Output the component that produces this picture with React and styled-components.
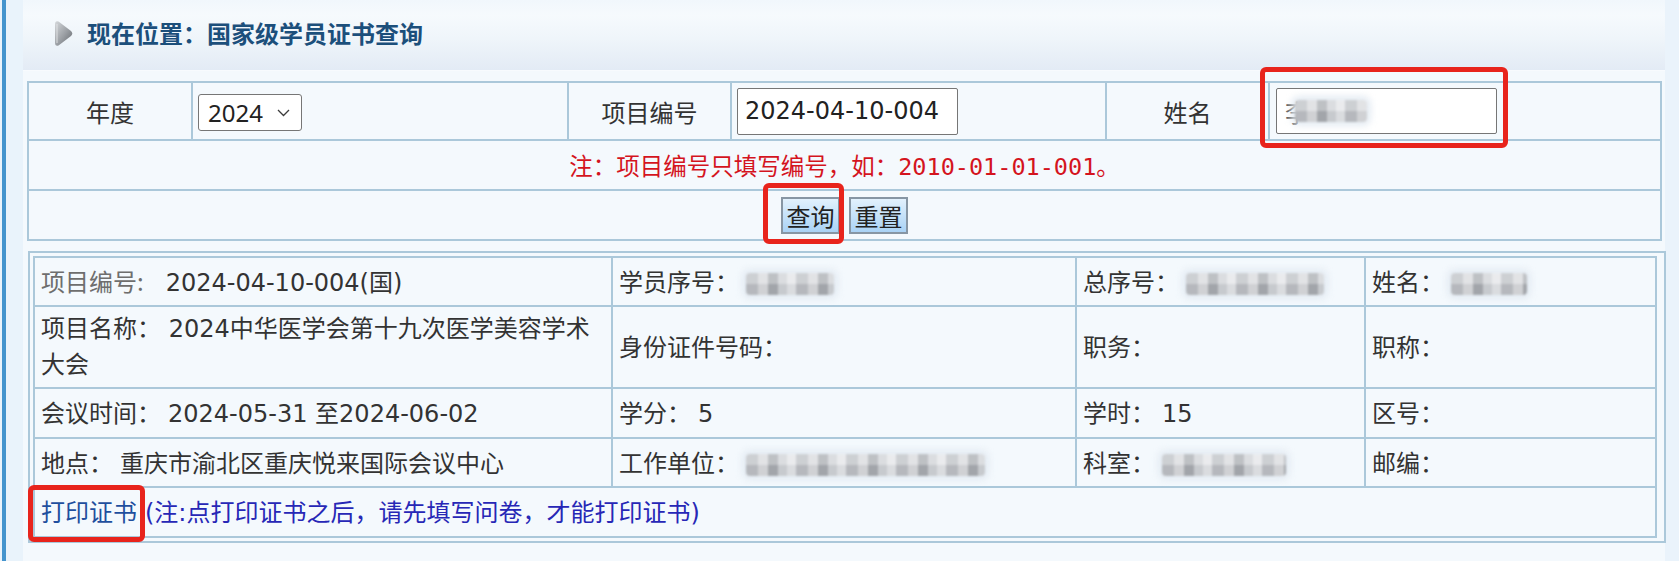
import React from 'react'
import styled, { createGlobalStyle } from 'styled-components'

const cjk = `"DejaVu Sans", "Noto Sans CJK SC", sans-serif`

const GlobalStyle = createGlobalStyle`
    html, body {
        margin: 0;
        padding: 0;
    }
    body {
        background: #eaf3fb;
        font-family: ${cjk};
        font-size: 24px;
        color: #333;
    }
`

const marks = [
    { left: 1260, top: 67, width: 248, height: 81 },
    { left: 763, top: 183, width: 81, height: 61 },
    { left: 28, top: 485, width: 117, height: 57 },
]

function Blur({ w }) {
    return <Mosaic $w={w} />
}

function App() {
    return (
        <Page>
            <GlobalStyle />
            <Strip />
            <Gutter />
            <Main>
                <Header>
                    <svg width="19" height="27" viewBox="0 0 19 27">
                        <defs>
                            <linearGradient id="arw" x1="0" y1="0" x2="1" y2="1">
                                <stop offset="0" stopColor="#d5d8db" />
                                <stop offset="0.55" stopColor="#9a9ea3" />
                                <stop offset="1" stopColor="#64686d" />
                            </linearGradient>
                        </defs>
                        <path d="M4.5 1.5 Q1 0.3 1 4.5 L1 22.5 Q1 26.7 4.5 25.5 L17 16 Q19.5 13.5 17 11 Z" fill="url(#arw)" />
                        <path d="M3 4 L3 23" stroke="#e6e8ea" strokeWidth="1.2" opacity="0.7" />
                    </svg>
                    <Title>现在位置：国家级学员证书查询</Title>
                </Header>

                <Body>
                    <SearchTable>
                        <colgroup>
                            <col width="164" />
                            <col width="376" />
                            <col width="163" />
                            <col width="375" />
                            <col width="163" />
                            <col width="392" />
                        </colgroup>
                        <tbody>
                            <SearchRow $h={58}>
                                <FieldLabel>年度</FieldLabel>
                                <FieldCell>
                                    <SelectWrap>
                                        <Select defaultValue="2024">
                                            <option value="2024">2024</option>
                                        </Select>
                                        <Chevron width="13" height="8" viewBox="0 0 13 8">
                                            <path d="M1 1 L6.5 6.5 L12 1" fill="none" stroke="#3c3c3c" strokeWidth="1.3" />
                                        </Chevron>
                                    </SelectWrap>
                                </FieldCell>
                                <FieldLabel>项目编号</FieldLabel>
                                <FieldCell>
                                    <TextInput defaultValue="2024-04-10-004" />
                                </FieldCell>
                                <FieldLabel>姓名</FieldLabel>
                                <FieldCell>
                                    <FakeInput>
                                        <span>李</span>
                                        <Mosaic $w={72} $shift={-14} />
                                    </FakeInput>
                                </FieldCell>
                            </SearchRow>
                            <SearchRow $h={50}>
                                <Note colSpan={6}>注：项目编号只填写编号，如：2010-01-01-001。</Note>
                            </SearchRow>
                            <SearchRow $h={50}>
                                <td colSpan={6}>
                                    <Buttons>
                                        <Button>查询</Button>
                                        <Button>重置</Button>
                                    </Buttons>
                                </td>
                            </SearchRow>
                        </tbody>
                    </SearchTable>

                    <ResultFrame>
                        <ResultTable>
                            <colgroup>
                                <col width="578" />
                                <col width="464" />
                                <col width="289" />
                                <col width="291" />
                            </colgroup>
                            <tbody>
                                <ResultRow $h={49}>
                                    <Cell><Label $muted $gap={22}>项目编号:</Label>2024-04-10-004(国)</Cell>
                                    <Cell><Label>学员序号：</Label><Blur w={88} /></Cell>
                                    <Cell><Label>总序号：</Label><Blur w={138} /></Cell>
                                    <Cell><Label>姓名：</Label><Blur w={76} /></Cell>
                                </ResultRow>
                                <ResultRow $h={82}>
                                    <Cell>{'项目名称：\u00a02024中华医学会第十九次医学美容学术大会'}</Cell>
                                    <Cell><Label>身份证件号码：</Label></Cell>
                                    <Cell><Label>职务：</Label></Cell>
                                    <Cell><Label>职称：</Label></Cell>
                                </ResultRow>
                                <ResultRow $h={50}>
                                    <Cell><Label>会议时间：</Label>2024-05-31 至2024-06-02</Cell>
                                    <Cell><Label>学分：</Label>5</Cell>
                                    <Cell><Label>学时：</Label>15</Cell>
                                    <Cell><Label>区号：</Label></Cell>
                                </ResultRow>
                                <ResultRow $h={49}>
                                    <Cell><Label>地点：</Label>重庆市渝北区重庆悦来国际会议中心</Cell>
                                    <Cell><Label>工作单位：</Label><Blur w={239} /></Cell>
                                    <Cell><Label>科室：</Label><Blur w={124} /></Cell>
                                    <Cell><Label>邮编：</Label></Cell>
                                </ResultRow>
                                <ResultRow $h={50}>
                                    <Cell colSpan={4}>
                                        <PrintLink>打印证书</PrintLink>
                                        <PrintNote>(注:点打印证书之后，请先填写问卷，才能打印证书)</PrintNote>
                                    </Cell>
                                </ResultRow>
                            </tbody>
                        </ResultTable>
                    </ResultFrame>
                </Body>
            </Main>

            {marks.map((m, i) => (
                <Mark key={i} $left={m.left} $top={m.top} $w={m.width} $h={m.height} />
            ))}
        </Page>
    )
}

export default App

const Page = styled.div`
    position: relative;
    display: flex;
    height: 561px;
    padding-left: 2px;
    overflow: hidden;
`

const Strip = styled.div`
    flex: none;
    width: 4px;
    background: #4494cd;
`

const Gutter = styled.div`
    flex: none;
    width: 17px;
    background: #e9f3fb;
`

const Main = styled.div`
    flex: none;
    width: 1642px;
    background: #f4f9fd;
`

const Header = styled.div`
    height: 71px;
    box-sizing: border-box;
    display: flex;
    align-items: center;
    gap: 14px;
    padding: 0 0 5px 31px;
    border-bottom: 1px solid #f8fbfe;
    background: linear-gradient(to bottom, #f1f7fc 0%, #f6fafd 22%, #eff5fa 55%, #e3ebf5 100%);
    svg {
        margin-top: 2px;
    }
`

const Title = styled.h1`
    margin: 0;
    font-family: "Noto Sans CJK SC", sans-serif;
    font-size: 24px;
    font-weight: 700;
    color: #1c4f7b;
`

const Body = styled.div`
    padding: 10px 5px 0 4px;
`

const SearchTable = styled.table`
    width: 1633px;
    table-layout: fixed;
    border-collapse: collapse;
    td {
        border: 2px solid #abc8da;
        padding: 0 5px;
    }
`

const SearchRow = styled.tr`
    height: ${p => p.$h}px;
`

const FieldLabel = styled.td`
    text-align: center;
    font-family: "Noto Sans CJK SC", sans-serif;
    color: #333;
`

const FieldCell = styled.td`
    vertical-align: middle;
`

const SelectWrap = styled.div`
    position: relative;
    display: inline-block;
    vertical-align: middle;
    margin-top: 2px;
`

const Select = styled.select`
    appearance: none;
    display: block;
    width: 104px;
    height: 37px;
    padding: 0 0 0 9px;
    border: 1px solid #767676;
    border-radius: 3px;
    background: #fff;
    font-family: "Noto Sans", sans-serif;
    font-size: 24px;
    color: #222;
`

const Chevron = styled.svg`
    position: absolute;
    right: 12px;
    top: 15px;
    pointer-events: none;
`

const TextInput = styled.input`
    display: block;
    box-sizing: border-box;
    width: 221px;
    height: 47px;
    padding: 0 0 0 7px;
    border: 1px solid #767676;
    border-radius: 2px;
    background: #fff;
    font-family: ${cjk};
    font-size: 24px;
    color: #222;
`

const FakeInput = styled.div`
    display: flex;
    align-items: center;
    box-sizing: border-box;
    width: 221px;
    height: 46px;
    margin-left: 1px;
    padding-left: 8px;
    border: 1px solid #767676;
    border-radius: 2px;
    background: #fff;
    font-family: "Noto Sans CJK SC", sans-serif;
    color: #555;
    span {
        font-size: 24px;
    }
`

const Note = styled.td`
    text-align: center;
    font-family: "DejaVu Sans Mono", "Noto Sans CJK SC", monospace;
    font-size: 23.5px;
    color: #d4141e;
`

const Buttons = styled.div`
    display: flex;
    justify-content: center;
    gap: 9px;
    padding-top: 1px;
`

const Button = styled.button`
    box-sizing: border-box;
    width: 59px;
    height: 37px;
    padding: 0;
    border: 2px solid #8796a4;
    background: linear-gradient(to bottom, #e2f1fd 0%, #c6e2f9 50%, #a9d2f5 100%);
    font-family: "Noto Sans CJK SC", sans-serif;
    font-size: 24px;
    line-height: 1;
    color: #222;
`

const ResultFrame = styled.div`
    width: 1628px;
    margin: 10px 0 0 1px;
    padding: 3px;
    border: 2px solid #abc8da;
    box-sizing: content-box;
`

const ResultTable = styled.table`
    width: 1622px;
    table-layout: fixed;
    border-collapse: collapse;
`

const ResultRow = styled.tr`
    height: ${p => p.$h}px;
`

const Cell = styled.td`
    border: 2px solid #abc8da;
    padding: 0 6px;
    line-height: 36px;
    vertical-align: middle;
    color: #333;
`

const Label = styled.span`
    margin-right: ${p => p.$gap ?? 7}px;
    font-family: "Noto Sans CJK SC", sans-serif;
    color: ${p => (p.$muted ? '#6e6e6e' : '#333')};
`

const Mosaic = styled.span`
    display: inline-block;
    vertical-align: middle;
    width: ${p => p.$w}px;
    height: 22px;
    margin-left: ${p => p.$shift ?? 0}px;
    border-radius: 4px;
    background:
        linear-gradient(to bottom, rgba(255, 255, 255, 0.25) 0 50%, rgba(0, 0, 0, 0.04) 50% 100%),
        repeating-linear-gradient(90deg, #bdc0c5 0 12px, #d8dadd 12px 22px, #a9acb1 22px 32px, #cfd2d6 32px 41px, #e3e5e8 41px 50px);
    box-shadow: 0 0 6px 4px rgba(226, 234, 242, 0.9);
    filter: blur(0.8px);
`

const PrintLink = styled.a`
    font-family: "Noto Sans CJK SC", sans-serif;
    color: #1f4f9e;
    text-decoration: none;
`

const PrintNote = styled.span`
    margin-left: 8px;
    font-family: ${cjk};
    color: #2727b6;
`

const Mark = styled.div`
    position: absolute;
    left: ${p => p.$left}px;
    top: ${p => p.$top}px;
    width: ${p => p.$w}px;
    height: ${p => p.$h}px;
    box-sizing: border-box;
    border: 5px solid #e8241c;
    border-radius: 6px;
    pointer-events: none;
`
